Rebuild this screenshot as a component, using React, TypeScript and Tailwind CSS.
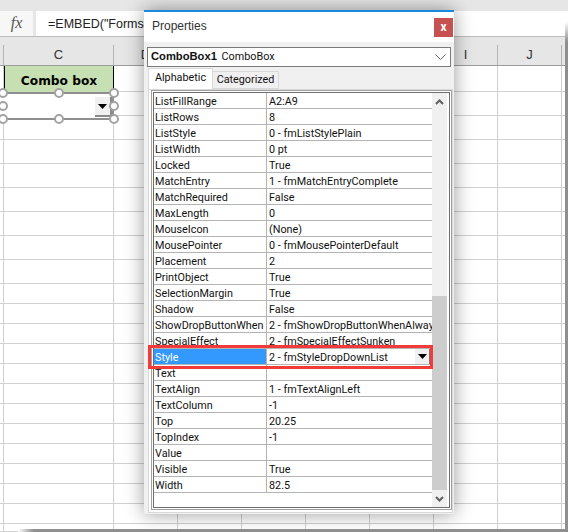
import React from "react";

const columns = [
  { label: "", width: "w-[4px]" },
  { label: "C", width: "w-[110px]" },
  { label: "D", width: "w-[64px]" },
  { label: "E", width: "w-[64px]" },
  { label: "F", width: "w-[64px]" },
  { label: "G", width: "w-[64px]" },
  { label: "H", width: "w-[64px]" },
  { label: "I", width: "w-[64px]" },
  { label: "J", width: "w-[64px]" },
  { label: "", width: "w-[4px]" },
];

const rowHeights = [
  ...Array(8).fill("h-[24px]"),
  ...Array(12).fill("h-[20px]"),
  "h-[8px]",
];

const props: [string, string][] = [
  ["ListFillRange", "A2:A9"],
  ["ListRows", "8"],
  ["ListStyle", "0 - fmListStylePlain"],
  ["ListWidth", "0 pt"],
  ["Locked", "True"],
  ["MatchEntry", "1 - fmMatchEntryComplete"],
  ["MatchRequired", "False"],
  ["MaxLength", "0"],
  ["MouseIcon", "(None)"],
  ["MousePointer", "0 - fmMousePointerDefault"],
  ["Placement", "2"],
  ["PrintObject", "True"],
  ["SelectionMargin", "True"],
  ["Shadow", "False"],
  ["ShowDropButtonWhen", "2 - fmShowDropButtonWhenAlways"],
  ["SpecialEffect", "2 - fmSpecialEffectSunken"],
  ["Style", "2 - fmStyleDropDownList"],
  ["Text", ""],
  ["TextAlign", "1 - fmTextAlignLeft"],
  ["TextColumn", "-1"],
  ["Top", "20.25"],
  ["TopIndex", "-1"],
  ["Value", ""],
  ["Visible", "True"],
  ["Width", "82.5"],
];

const Handle = ({ className }: { className: string }) => (
  <span className={`absolute h-[10px] w-[10px] rounded-full border-2 border-[#a3a3a3] bg-white ${className}`} />
);

const DropArrow = () => (
  <svg width="9" height="5" viewBox="0 0 9 5">
    <path d="M0 0h9L4.5 5z" fill="#000" />
  </svg>
);

const Chevron = ({ up }: { up?: boolean }) => (
  <svg width="9" height="6" viewBox="0 0 9 6" fill="none" stroke="#606060" strokeWidth="2">
    <path d={up ? "M1 5l3.5-3.5L8 5" : "M1 1l3.5 3.5L8 1"} />
  </svg>
);

const Sheet = () => (
  <div className="flex h-full flex-col font-['Liberation_Sans',sans-serif]">
    <div className="h-[10px] bg-[#e6e6e6]" />
    <div className="flex h-[27px] border-b border-[#bdbdbd] bg-[#e6e6e6] pt-px">
      <div className="flex w-[33px] items-center justify-center bg-[#f7f7f7] font-['Liberation_Serif',serif] text-[16px] text-[#555] italic">
        fx
      </div>
      <div className="ml-[3px] flex-1 bg-white pt-px pl-[12px] text-[12.5px] leading-[25px] whitespace-nowrap text-[#222]">
        =EMBED("Forms.ComboBox.1","")
      </div>
      <div className="w-[3px] bg-white" />
    </div>
    <div className="flex h-[30px] items-end border-b border-[#9d9d9d] bg-[#e6e6e6]">
      {columns.map((c, i) => (
        <div
          key={i}
          className={`flex h-[20px] shrink-0 items-center justify-center border-r border-[#b4b4b4] text-[13px] text-[#333] ${c.width}`}
        >
          {c.label}
        </div>
      ))}
    </div>
    <div className="flex h-[27px]">
      {columns.map((c, i) =>
        i === 1 ? (
          <div
            key={i}
            className="flex w-[110px] shrink-0 items-start justify-center border-x border-black bg-[#c6e0b4] pt-[6px] font-['DejaVu_Sans',sans-serif] text-[12.2px] font-bold text-black"
          >
            Combo box
          </div>
        ) : (
          <div key={i} className={`shrink-0 border-r border-b border-[#d0d0d0] ${c.width}`} />
        ),
      )}
    </div>
    {rowHeights.map((h, r) => (
      <div key={r} className={`flex shrink-0 ${h}`}>
        {columns.map((c, i) => (
          <div key={i} className={`shrink-0 border-r border-b border-[#d0d0d0] ${c.width}`} />
        ))}
      </div>
    ))}
  </div>
);

const ComboOverlay = () => (
  <>
    <div className="absolute top-[92px] left-[3px] h-[28px] w-[111px] border-y-2 border-r-2 border-[#8f8f8f] bg-white" />
    <div className="absolute top-[97px] left-[95px] flex h-[20px] w-[17px] items-center justify-center border-r-2 border-b-2 border-[#8a8a8a] bg-[#f0f0f0]">
      <DropArrow />
    </div>
    <Handle className="top-[88px] left-[-2px]" />
    <Handle className="top-[88px] left-[54px]" />
    <Handle className="top-[88px] left-[109px]" />
    <Handle className="top-[101px] left-[-2px]" />
    <Handle className="top-[101px] left-[109px]" />
    <Handle className="top-[114px] left-[-2px]" />
    <Handle className="top-[114px] left-[54px]" />
    <Handle className="top-[114px] left-[109px]" />
  </>
);

const PropertiesWindow = () => (
  <div className="absolute top-[10px] left-[144px] flex h-[504px] w-[310px] flex-col border-t-2 border-[#1a8ae0] bg-[#f0f0f0] font-['Roboto',sans-serif] text-[10.8px] text-[#111] shadow-[0_0_18px_rgba(0,0,0,0.4)]">
    <div className="flex h-[30px] shrink-0 items-start justify-between bg-white">
      <span className="pt-[5px] pl-[8px] font-['Liberation_Sans',sans-serif] text-[12px] text-[#333]">Properties</span>
      <span className="mt-[6px] mr-px flex h-[19px] w-[19px] items-center justify-center bg-[#c75050] pb-[2px] text-[12px] font-bold text-white">
        x
      </span>
    </div>
    <div className="mx-[3px] mt-[5px] flex h-[20px] shrink-0 items-center justify-between border border-[#7a7a7a] bg-white pr-[4px] pl-[3px] leading-none">
      <span className="whitespace-nowrap">
        <b className="font-['Liberation_Sans',sans-serif] text-[11.2px]">ComboBox1</b>{" "}
        <span className="ml-[2px]">ComboBox</span>
      </span>
      <svg width="11" height="6" viewBox="0 0 11 6" fill="none" stroke="#666" strokeWidth="1">
        <path d="M.5.5l5 5 5-5" />
      </svg>
    </div>
    <div className="mt-[2px] flex h-[20px] shrink-0 items-end pl-[4px]">
      <span className="z-10 flex h-[21px] w-[65px] items-center justify-center border border-b-0 border-[#d9d9d9] bg-white pb-[2px]">
        Alphabetic
      </span>
      <span className="flex h-[18px] w-[66px] items-center justify-center border border-l-0 border-[#d9d9d9]">
        Categorized
      </span>
    </div>
    <div className="mr-px ml-[4px] flex min-h-0 flex-1 flex-col border border-[#d9d9d9] bg-white pb-[2px] pl-[2px]">
      <div className="flex min-h-0 flex-1 border border-[#a0a0a0] p-px">
        <div className="flex min-h-0 min-w-0 flex-1 border border-[#6e6e6e]">
          <div className="min-w-0 flex-1 overflow-hidden">
            {props.map(([name, value]) => {
              const selected = name === "Style";
              return (
                <div key={name} className="flex h-[16px] border-b border-[#b4b4b4] leading-[17px] whitespace-nowrap">
                  <div
                    className={`w-[113px] shrink-0 overflow-hidden border-r border-[#b4b4b4] pl-px ${selected ? "bg-[#3399ff] text-white" : ""}`}
                  >
                    {name}
                  </div>
                  <div className="relative min-w-0 flex-1 overflow-hidden pl-[2px]">
                    {value}
                    {selected && (
                      <span className="absolute top-0 right-[2px] flex h-[16px] w-[15px] items-center justify-center border-r border-b border-[#777] bg-[#f0f0f0]">
                        <DropArrow />
                      </span>
                    )}
                  </div>
                </div>
              );
            })}
          </div>
          <div className="flex w-[15px] shrink-0 flex-col bg-[#f0f0f0]">
            <div className="flex h-[16px] shrink-0 items-center justify-center pt-[2px]">
              <Chevron up />
            </div>
            <div className="mt-[187px] h-[194px] bg-[#cdcdcd]" />
            <div className="flex flex-1 items-center justify-center">
              <Chevron />
            </div>
          </div>
          <div className="w-[2px] shrink-0" />
        </div>
      </div>
    </div>
    <div className="h-px shrink-0" />
  </div>
);

export default function App() {
  return (
    <div className="relative h-[532px] w-[568px] overflow-hidden bg-white">
      <Sheet />
      <ComboOverlay />
      <PropertiesWindow />
      <div className="absolute top-[345px] left-[148px] h-[24px] w-[285px] border-[3px] border-[#f23a3a]" />
      <div className="absolute top-[22px] right-0 bottom-0 w-[3px] bg-gradient-to-b from-white to-[#8f8f8f] to-[20px]" />
      <div className="absolute right-0 bottom-0 left-[18px] h-[3px] bg-gradient-to-r from-white to-[#8f8f8f] to-[16px]" />
    </div>
  );
}
